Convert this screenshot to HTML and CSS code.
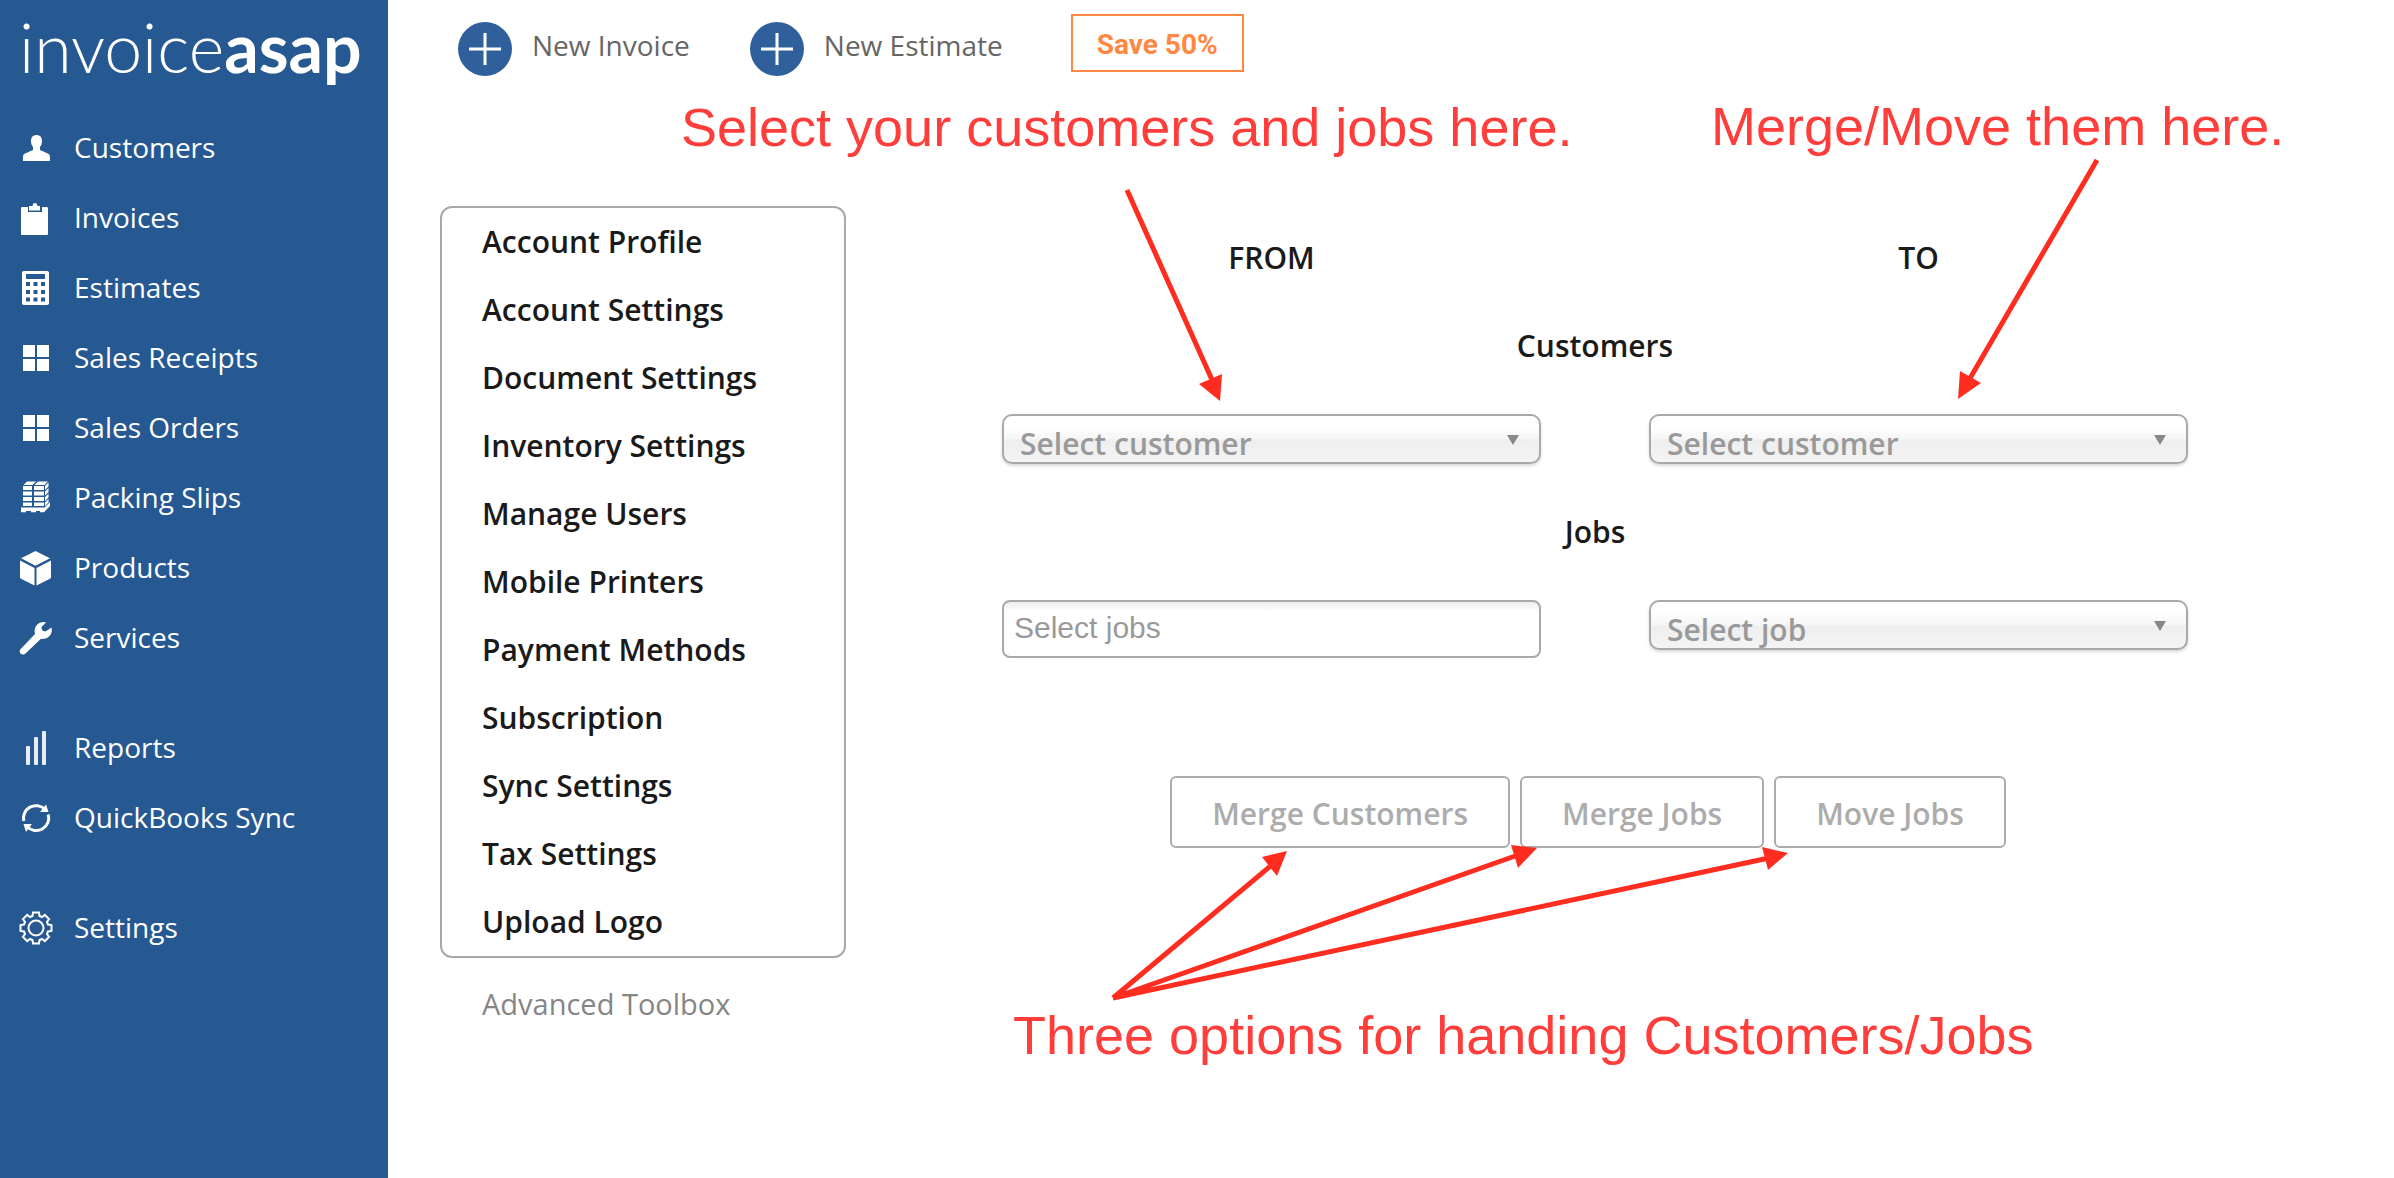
FILE: index.html
```html
<!DOCTYPE html>
<html lang="en">
<head>
    <meta charset="UTF-8">
    <meta name="viewport" content="width=device-width, initial-scale=1.0">
    <title>InvoiceASAP - Merge Customers and Jobs</title>
    <link rel="stylesheet" href="styles.css">
</head>
<body>
    <aside class="sidebar">
        <a href="#" class="logo">invoice<b>asap</b></a>
        <nav class="nav">
            <ul class="nav-group">
                <li><a href="#customers">
                    <svg viewBox="0 0 36 36"><path d="M18.500 6c3.500 0 5.500 2.300 5.500 6 0 2.500-.8 4.600-2 6v3c2.500 1.500 7.500 2.800 9 4.200 1 .9 1 2.200 1 6.800H5c0-4.600 0-5.900 1-6.800 1.500-1.400 6.500-2.700 9-4.200v-3c-1.200-1.400-2-3.500-2-6 0-3.700 2-6 5.500-6z"/></svg>
                    Customers</a></li>
                <li><a href="#invoices">
                    <svg viewBox="0 0 36 36"><path d="M4.500 8H10v5h14V8h4.500c1 0 1.500.5 1.500 1.500v25c0 1-.5 1.500-1.500 1.500h-24C3.500 36 3 35.500 3 34.500v-25C3 8.500 3.500 8 4.500 8z"/><path d="M11 7h3.500c.3-2 1-3 2.500-3s2.200 1 2.500 3H22v4.500H11z"/></svg>
                    Invoices</a></li>
                <li><a href="#estimates">
                    <svg viewBox="0 0 36 36"><path fill-rule="evenodd" d="M6 2h23c1.300 0 2 .7 2 2v30c0 1.300-.7 2-2 2H6c-1.300 0-2-.7-2-2V4c0-1.300.7-2 2-2zm2 3v5h19V5zm0 8v4h4v-4zm7.500 0v4h4v-4zm7.500 0v4h4v-4zM8 21v4h4v-4zm7.500 0v4h4v-4zm7.500 0v4h4v-4zM8 28.500v4h4v-4zm7.500 0v4h4v-4zm7.500 0v4h4v-4z"/></svg>
                    Estimates</a></li>
                <li><a href="#receipts">
                    <svg viewBox="0 0 36 36"><path d="M5 6h12v12H5zM19 6h12v12H19zM5 20h12v12H5zM19 20h12v12H19z"/></svg>
                    Sales Receipts</a></li>
                <li><a href="#orders">
                    <svg viewBox="0 0 36 36"><path d="M5 6h12v12H5zM19 6h12v12H19zM5 20h12v12H5zM19 20h12v12H19z"/></svg>
                    Sales Orders</a></li>
                <li><a href="#packing">
                    <svg viewBox="0 0 36 36"><path d="M9 2.500h9L14.500 6H5.500zM20 2.500h10L26.500 6h-10zM5 7h9v4H5zM16 7h10v4H16zM5 12.500h9v4H5zM16 12.500h10v4H16zM5 18h9v4H5zM16 18h10v4H16zM5 23.500h9V27H5zM16 23.500h10V27H16zM27 7l3.500-3.500v4L27 11zM27 12.500L30.500 9v4L27 16.500zM27 18l3.500-3.500v4L27 22zM27 23.500l3.500-3.500v3.500L27 27zM3 28.500h23.500L32 23v4l-6 6.200h-4V32h-4v1.200h-5V32H8v1.200H3z"/></svg>
                    Packing Slips</a></li>
                <li><a href="#products">
                    <svg viewBox="0 0 36 36"><path d="M17.500 2L32 9.300l-14.500 7.500L3 9.300zM2 11.500L16.500 19v17.500L3.500 30C2.400 29.400 2 29 2 28zM33 11.500V28c0 1-.4 1.400-1.500 2l-13 6.500V19z"/></svg>
                    Products</a></li>
                <li><a href="#services">
                    <svg viewBox="0 0 36 36"><path d="M25.500 3c1 0 2 .2 2.500.5l-4 4c-.8 1-.5 2.500.3 3.700 1.200 1.300 3.200 1.500 4.400.5L33.500 8.500c.9 3 .1 6.500-2.200 8.800-2.500 2.500-5.500 3-8.300 2.500L7.500 34.600c-1.300 1.300-3.500 1.300-4.800.2-1.400-1.400-1.300-3.500 0-4.800L17 15c-.9-3-.4-6.500 1.800-8.900C20.600 4 23 3 25.500 3z"/></svg>
                    Services</a></li>
            </ul>
            <ul class="nav-group">
                <li><a href="#reports">
                    <svg viewBox="0 0 36 36" opacity=".9"><rect x="8" y="17" width="4" height="19" rx="1"/><rect x="16" y="8" width="4" height="28" rx="1"/><rect x="24" y="2" width="4" height="34" rx="1"/></svg>
                    Reports</a></li>
                <li><a href="#sync">
                    <svg viewBox="0 0 36 36"><path class="line-thick" d="M5.800 22A12.500 12.500 0 0 1 27 10.500M30.200 15.500A12.500 12.500 0 0 1 9 27.500"/><path d="M28 5.500l2.500 7.500h-8.500zM8 33L5.500 25H14z"/></svg>
                    QuickBooks Sync</a></li>
            </ul>
            <ul class="nav-group">
                <li><a href="#settings">
                    <svg viewBox="-18 -19 36 36"><path class="line" d="M-3-15.500H3L3.500-12 6-10.960 8.840-13.080 13.080-8.840 10.960-6 12-3.500 15.500-3V3L12 3.500 10.960 6 13.080 8.840 8.840 13.080 6 10.960 3.500 12 3 15.500H-3L-3.500 12-6 10.960-8.840 13.080-13.080 8.840-10.960 6-12 3.500-15.500 3V-3L-12-3.500-10.960-6-13.080-8.840-8.840-13.080-6-10.960-3.500-12z"/><circle class="line" r="7.500"/></svg>
                    Settings</a></li>
            </ul>
        </nav>
    </aside>

    <main class="main">
        <header class="topbar">
            <a href="#new-invoice" class="new-link">
                <svg viewBox="0 0 54 54"><circle cx="27" cy="27" r="27"/><path d="M27 11v32M11 27h32"/></svg>
                New Invoice
            </a>
            <a href="#new-estimate" class="new-link">
                <svg viewBox="0 0 54 54"><circle cx="27" cy="27" r="27"/><path d="M27 11v32M11 27h32"/></svg>
                New Estimate
            </a>
            <button type="button" class="save-button">Save 50%</button>
        </header>

        <div class="content">
            <div class="settings">
                <ul class="settings-menu">
                    <li><a href="#">Account Profile</a></li>
                    <li><a href="#">Account Settings</a></li>
                    <li><a href="#">Document Settings</a></li>
                    <li><a href="#">Inventory Settings</a></li>
                    <li><a href="#">Manage Users</a></li>
                    <li><a href="#">Mobile Printers</a></li>
                    <li><a href="#">Payment Methods</a></li>
                    <li><a href="#">Subscription</a></li>
                    <li><a href="#">Sync Settings</a></li>
                    <li><a href="#">Tax Settings</a></li>
                    <li><a href="#">Upload Logo</a></li>
                </ul>
                <a href="#toolbox" class="toolbox-link">Advanced Toolbox</a>
            </div>

            <form class="merge-form">
                <h2>FROM</h2>
                <h2>TO</h2>

                <h2 class="wide">Customers</h2>
                <div class="select-box">
                    <select aria-label="From customer"><option>Select customer</option></select>
                </div>
                <div class="select-box">
                    <select aria-label="To customer"><option>Select customer</option></select>
                </div>

                <h2 class="wide">Jobs</h2>
                <input type="text" class="jobs-input" placeholder="Select jobs" aria-label="From jobs">
                <div class="select-box">
                    <select aria-label="To job"><option>Select job</option></select>
                </div>

                <div class="actions wide">
                    <button type="button">Merge Customers</button>
                    <button type="button">Merge Jobs</button>
                    <button type="button">Move Jobs</button>
                </div>
            </form>
        </div>

        <!-- help notes drawn over the page -->
        <p class="note note-select">Select your customers and jobs here.</p>
        <p class="note note-merge">Merge/Move them here.</p>
        <p class="note note-options">Three options for handing Customers/Jobs</p>
        <svg class="arrows" viewBox="388 0 2006 1178" preserveAspectRatio="xMinYMin meet">
            <path d="M1127 190L1213 382M2097 160L1969 380M1113 998L1274 863M1113 998L1518 855M1113 998L1769 858"/>
            <polygon points="1220,401 1199,384 1222,374"/>
            <polygon points="1958,399 1960,371 1981,383"/>
            <polygon points="1287,851 1262,857 1277,876"/>
            <polygon points="1537,848 1511,845 1518,868"/>
            <polygon points="1788,853 1762,847 1768,870"/>
        </svg>
    </main>
</body>
</html>
```
FILE: styles.css
```css
* {
    box-sizing: border-box;
}
body {
    margin: 0;
    display: flex;
    min-height: 100vh;
    font-family: "Open Sans", sans-serif;
    font-size: 30px;
    line-height: 40px;
    color: #1a1a1a;
    background-color: white;
}
a {
    color: inherit;
    text-decoration: none;
}
ul {
    list-style: none;
    margin: 0;
    padding: 0;
}
.sidebar {
    flex: 0 0 388px;
    background-color: #265891;
    color: white;
}
.logo {
    display: block;
    height: 112px;
    padding: 11px 0 0 19px;
    font-family: Lato, sans-serif;
    font-size: 68px;
    font-weight: 300;
    line-height: 72px;
}
.logo b {
    font-weight: 700;
}
.nav {
    display: flex;
    flex-direction: column;
    gap: 40px;
}
.nav-group a {
    display: flex;
    align-items: center;
    gap: 20px;
    height: 70px;
    padding-left: 18px;
    font-size: 28px;
}
.nav-group svg {
    width: 36px;
    height: 36px;
    fill: white;
    overflow: visible;
}
.nav-group .line,
.nav-group .line-thick {
    fill: none;
    stroke: white;
    stroke-width: 2;
}
.nav-group .line-thick {
    stroke-width: 3;
}
.main {
    position: relative;
    flex: 1;
}
.topbar {
    display: flex;
    align-items: flex-start;
    gap: 60px;
    height: 206px;
    padding: 14px 0 0 70px;
}
.new-link {
    display: flex;
    gap: 20px;
    padding-top: 8px;
    font-size: 28px;
    line-height: 46px;
    color: #666;
}
.new-link svg {
    width: 54px;
    height: 54px;
    fill: #30609c;
    stroke: none;
}
.new-link path {
    stroke: white;
    stroke-width: 3;
}
.save-button {
    height: 58px;
    margin-left: 8px;
    padding: 2px 24px 0;
    border: 2px solid #ff8742;
    background: none;
    color: #ff8742;
    font-family: Roboto, sans-serif;
    font-size: 28px;
    font-weight: 700;
}
.content {
    display: flex;
    gap: 156px;
    padding: 0 206px 0 52px;
}
.settings {
    flex: 0 0 406px;
    line-height: 68px;
}
.settings-menu {
    border: 2px solid #a9a9a9;
    border-radius: 12px;
    font-weight: 600;
}
.settings-menu a,
.toolbox-link {
    display: block;
    padding-left: 40px;
}
.toolbox-link {
    margin-top: 12px;
    padding-left: 42px;
    font-size: 29px;
    color: #858585;
}
.merge-form {
    flex: 1;
    display: grid;
    grid-template-columns: 1fr 1fr;
    gap: 48px 108px;
    align-content: start;
    padding-top: 32px;
}
.merge-form h2 {
    margin: 0;
    font-size: 30px;
    font-weight: 600;
    line-height: 40px;
    text-align: center;
}
.wide {
    grid-column: 1 / -1;
}
.select-box {
    position: relative;
}
.select-box::after {
    content: "";
    position: absolute;
    top: 21px;
    right: 22px;
    border: 6px solid transparent;
    border-top: 10px solid #888;
    border-bottom: none;
    pointer-events: none;
}
.select-box select {
    appearance: none;
    display: block;
    width: 100%;
    height: 50px;
    padding: 8px 40px 0 16px;
    border: 2px solid #a9a9a9;
    border-radius: 10px;
    background: linear-gradient(white 20%, #f6f6f6 50%, #eee 52%, #f4f4f4 100%);
    box-shadow: 0 2px 3px rgba(0,0,0,0.15);
    color: #999;
    font-family: inherit;
    font-size: 30px;
    font-weight: 600;
    line-height: 40px;
}
.jobs-input {
    width: 100%;
    height: 58px;
    padding: 0 10px 2px;
    border: 2px solid #a9a9a9;
    border-radius: 8px;
    background: linear-gradient(#eee, white 10px);
    font-family: "Liberation Sans", Arial, sans-serif;
    font-size: 30px;
}
.jobs-input::placeholder {
    color: #999;
    opacity: 1;
}
.actions {
    display: flex;
    justify-content: center;
    gap: 10px;
    margin-top: 70px;
    padding-right: 14px;
}
.actions button {
    height: 72px;
    padding: 2px 40px 0;
    border: 2px solid #acacac;
    border-radius: 6px;
    background-color: white;
    color: #acacac;
    font-family: inherit;
    font-size: 30px;
    font-weight: 600;
}
.note {
    position: absolute;
    margin: 0;
    color: #ff3d3a;
    font-family: "Liberation Sans", Arial, sans-serif;
    font-size: 54px;
    line-height: 60px;
    white-space: nowrap;
}
.note-select {
    top: 97px;
    left: 293px;
}
.note-merge {
    top: 96px;
    left: 1323px;
}
.note-options {
    top: 1005px;
    left: 625px;
}
.arrows {
    position: absolute;
    top: 0;
    left: 0;
    width: 100%;
    fill: #ff2d1f;
    pointer-events: none;
}
.arrows path {
    fill: none;
    stroke: #ff2d1f;
    stroke-width: 5;
}
```
